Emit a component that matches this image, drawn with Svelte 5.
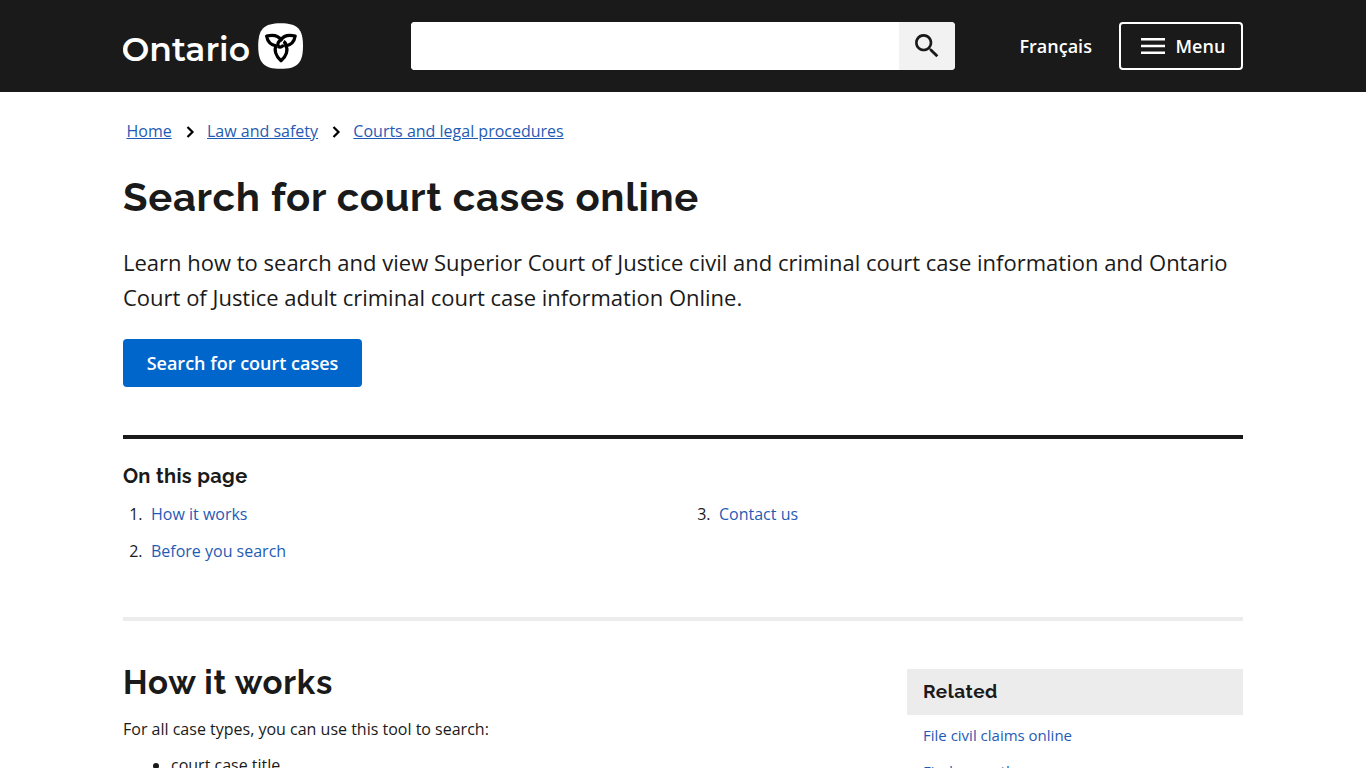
<style>
    :global(body) {
        margin: 0;
        background: #fff;
    }

    .page {
        height: 768px;
        overflow: hidden;
        color: #1a1a1a;
        font-family: "Open Sans", sans-serif;
        font-size: 16px;
        font-weight: 400;
    }

    .container {
        width: 1120px;
        margin: 0 auto;
    }

    a {
        color: #1f5bb5;
        text-decoration: none;
    }

    h1, h2, h3 {
        margin: 0;
        font-family: Raleway, Lato, sans-serif;
        font-weight: 700;
    }

    header {
        background: #1a1a1a;
        height: 92px;
    }

    .header-row {
        height: 92px;
        display: flex;
        align-items: center;
    }

    .logo {
        width: 288px;
        height: 92px;
        display: flex;
    }

    .logo svg {
        display: block;
        width: 190px;
        height: 92px;
    }

    .logo text {
        font-family: Montserrat, Lato, sans-serif;
        font-size: 34px;
        font-weight: 600;
        fill: #fff;
    }

    .search {
        display: flex;
        width: 544px;
        height: 48px;
        border-radius: 4px;
        overflow: hidden;
        background: #fff;
    }

    .search input {
        flex: 1;
        min-width: 0;
        border: 0;
        padding: 0 16px;
        font: inherit;
        outline: none;
    }

    .search button {
        width: 56px;
        border: 0;
        padding: 0;
        background: #f2f2f2;
        display: flex;
        align-items: center;
        justify-content: center;
    }

    .language {
        margin-left: 64.5px;
        width: 99.5px;
        color: #fff;
        font-size: 18px;
        font-weight: 600;
    }

    .menu {
        box-sizing: border-box;
        width: 124px;
        height: 48px;
        padding: 0 0 0 20px;
        border: 2px solid #fff;
        border-radius: 4px;
        background: transparent;
        color: #fff;
        font: 600 18px "Open Sans", sans-serif;
        display: flex;
        align-items: center;
        gap: 10.5px;
    }

    .breadcrumbs {
        display: flex;
        align-items: center;
        height: 24px;
        padding: 27px 0 0 3.5px;
    }

    .breadcrumbs a {
        text-decoration: underline;
    }

    .breadcrumbs svg {
        margin: 1px 12px 0 14.3px;
    }

    h1 {
        margin-top: 28px;
        font-size: 40px;
        line-height: 52px;
        letter-spacing: 0.7px;
        white-space: nowrap;
    }

    .lead {
        margin: 22px 0 0;
        font-size: 22px;
        line-height: 35px;
    }

    .cta {
        display: inline-flex;
        align-items: center;
        justify-content: center;
        width: 239px;
        height: 48px;
        margin-top: 24px;
        border-radius: 4px;
        background: #06c;
        color: #fff;
        font-size: 18px;
        font-weight: 600;
    }

    .toc {
        box-sizing: border-box;
        height: 186px;
        margin-top: 48px;
        border-top: 4px solid #1a1a1a;
        border-bottom: 4px solid #ececec;
        padding-top: 23px;
    }

    .toc h2 {
        font-size: 20px;
        line-height: 28px;
        letter-spacing: 0.35px;
    }

    .toc ol {
        margin: 12px 0 0;
        padding: 0;
        list-style: none;
        display: grid;
        grid-template-columns: 568px 1fr;
        grid-template-rows: 24px 24px;
        grid-auto-flow: column;
        row-gap: 13px;
        line-height: 24px;
    }

    .toc li {
        display: flex;
    }

    .toc li span {
        width: 19.5px;
        margin-right: 8.5px;
        text-align: right;
    }

    .columns {
        display: flex;
        justify-content: space-between;
        padding-top: 48px;
    }

    .main h2 {
        margin-top: -8px;
        font-size: 33px;
        line-height: 43px;
        letter-spacing: 0.75px;
    }

    .main p {
        margin: 13px 0 12px;
        line-height: 24px;
    }

    .main ul {
        margin: 0;
        padding-left: 48px;
        line-height: 25px;
    }

    aside {
        width: 336px;
    }

    aside h3 {
        height: 46px;
        padding-left: 16px;
        background: #ececec;
        font-size: 19px;
        line-height: 45px;
        letter-spacing: 0.5px;
    }

    aside ul {
        margin: 0;
        padding: 2px 16px;
        list-style: none;
        font-size: 15px;
        line-height: 36px;
    }
</style>

<script>
	const breadcrumbs = ['Home', 'Law and safety', 'Courts and legal procedures'];
	const sections = ['How it works', 'Before you search', 'Contact us'];
	const related = ['File civil claims online', 'Find a courthouse'];

	let query = '';
</script>

<div class="page">
	<header>
		<div class="container header-row">
			<a class="logo" href="/" aria-label="Ontario">
				<svg viewBox="0 0 190 92">
					<text x="-1.500" y="60.500" textLength="128.500" lengthAdjust="spacingAndGlyphs">Ontario</text>
					<path fill="#fff" d="M157.700 23.200C174.500 23.200 180 29 180 46S174.500 68.800 157.700 68.800 135.200 63 135.200 46 141 23.200 157.700 23.200Z" />
					<g fill="none" stroke="#000" stroke-width="3.200" stroke-linejoin="round">
						<path d="M153 45.800C148 45 144.500 41.500 143.600 36C149.500 34.600 155.500 35.500 158 40C155.300 41.300 154.300 43.500 155.200 46.500" />
						<path d="M158 40C160.500 35.500 166 34.600 172.200 36C171.300 41.500 167.800 45 163 45.800C163 43.800 162 42.300 160.500 41.500" />
						<path d="M162.500 44.800C165.800 50 163 56.500 158 60.800C153 56.500 150.500 50 153.500 44.800M155 46.500C157.500 47.800 160 46.800 160.300 44.500" />
					</g>
				</svg>
			</a>
			<form class="search" on:submit|preventDefault>
				<input type="text" aria-label="Search" bind:value={query} />
				<button type="submit" aria-label="Submit">
					<svg width="32" height="32" viewBox="0 0 24 24" fill="#1a1a1a">
						<path d="M15.500 14h-.79l-.28-.27A6.500 6.500 0 1 0 13.730 14.430l.27.28v.79l5 4.990L20.490 19l-4.990-5zm-6 0a4.500 4.500 0 1 1 0-9 4.500 4.500 0 0 1 0 9z" />
					</svg>
				</button>
			</form>
			<a class="language" href="/fr">Français</a>
			<button class="menu">
				<svg width="24" height="16" viewBox="0 0 24 16">
					<path fill="#fff" d="M0 0h24v2.500H0zM0 6.750h24v2.500H0zM0 13.500h24v2.500H0z" />
				</svg>
				Menu
			</button>
		</div>
	</header>

	<div class="container">
		<nav class="breadcrumbs">
			{#each breadcrumbs as crumb, i}
				{#if i > 0}
					<svg width="9" height="12" viewBox="0 0 9 12">
						<path d="M1.500 1L6.500 6L1.500 11" fill="none" stroke="#000" stroke-width="2.200" />
					</svg>
				{/if}
				<a href="/">{crumb}</a>
			{/each}
		</nav>

		<h1>Search for court cases online</h1>
		<p class="lead">Learn how to search and view Superior Court of Justice civil and criminal court case information and Ontario Court of Justice adult criminal court case information Online.</p>
		<a class="cta" href="/">Search for court cases</a>

		<div class="toc">
			<h2>On this page</h2>
			<ol>
				{#each sections as section, i}
					<li><span>{i + 1}.</span><a href="/">{section}</a></li>
				{/each}
			</ol>
		</div>

		<div class="columns">
			<div class="main">
				<h2>How it works</h2>
				<p>For all case types, you can use this tool to search:</p>
				<ul>
					<li>court case title</li>
				</ul>
			</div>
			<aside>
				<h3>Related</h3>
				<ul>
					{#each related as item}
						<li><a href="/">{item}</a></li>
					{/each}
				</ul>
			</aside>
		</div>
	</div>
</div>
